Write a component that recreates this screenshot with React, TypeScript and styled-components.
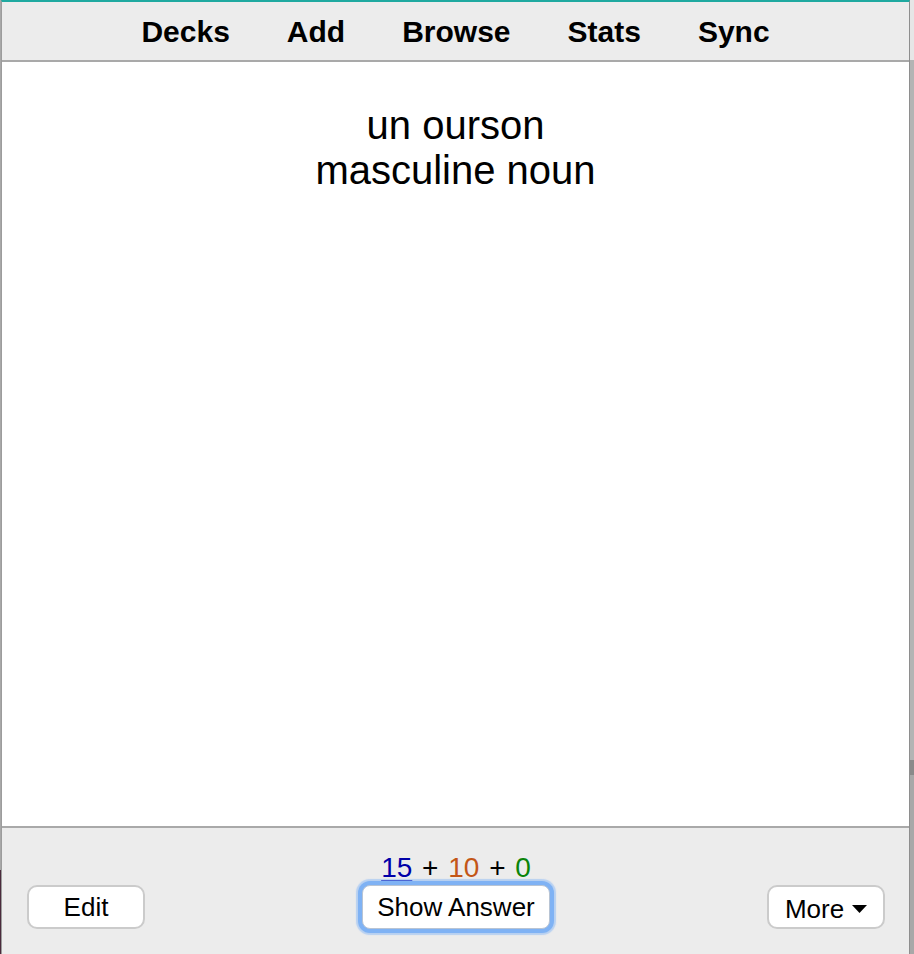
import React from "react";
import styled, { createGlobalStyle } from "styled-components";

const GlobalStyle = createGlobalStyle`
  html, body {
    margin: 0;
    padding: 0;
    background: #b8b8b8;
    overflow: hidden;
  }
  * { box-sizing: border-box; }
`;

const Screen = styled.div`
  display: flex;
  width: 914px;
  height: 954px;
  font-family: "Liberation Sans", Arial, Helvetica, sans-serif;
`;

const DesktopEdge = styled.div<{ $w: number; $bg: string }>`
  flex: 0 0 ${(p) => p.$w}px;
  background: ${(p) => p.$bg};
`;

const Window = styled.div`
  flex: 1;
  display: flex;
  flex-direction: column;
  border-top: 2px solid #1fa9a0;
  border-left: 1px solid #9c9c9c;
  border-right: 1px solid #8e8e8e;
  background: #ececec;
`;

const Toolbar = styled.nav`
  flex: 0 0 60px;
  display: flex;
  justify-content: center;
  align-items: center;
  gap: 57px;
  padding-top: 1px;
  background: #ececec;
  border-bottom: 2px solid #a9a9a9;
`;

const ToolLink = styled.span`
  font-size: 30px;
  font-weight: bold;
  color: #000;
`;

const Card = styled.main`
  flex: 1;
  background: #fff;
  padding-top: 41px;
  text-align: center;
  font-size: 40px;
  line-height: 45px;
  color: #000;
`;

const BottomBar = styled.footer`
  flex: 0 0 128px;
  display: grid;
  grid-template-columns: 1fr auto 1fr;
  align-items: end;
  padding: 0 24px 25px 25px;
  background: #ececec;
  border-top: 2px solid #a9a9a9;
`;

const Center = styled.div`
  display: flex;
  flex-direction: column;
  align-items: center;
`;

const Counts = styled.div`
  font-size: 28px;
  line-height: 30px;
  margin-bottom: 2px;
  word-spacing: 2px;
  color: #000;
`;

const Count = styled.span<{ $color: string; $underline?: boolean }>`
  color: ${(p) => p.$color};
  text-decoration: ${(p) => (p.$underline ? "underline" : "none")};
  text-decoration-thickness: 2px;
  text-underline-offset: 3px;
`;

const Button = styled.button<{ $width: number; $focused?: boolean; $align?: string }>`
  justify-self: ${(p) => p.$align || "center"};
  width: ${(p) => p.$width}px;
  height: 44px;
  display: inline-flex;
  align-items: center;
  justify-content: center;
  padding: 0;
  font-family: "Liberation Sans", Arial, Helvetica, sans-serif;
  font-size: 26px;
  color: #000;
  background: #fff;
  border: ${(p) => (p.$focused ? "1px solid #b8c4d4" : "2px solid #cbcbcb")};
  border-radius: ${(p) => (p.$focused ? "8px" : "10px")};
  box-shadow: ${(p) =>
    p.$focused
      ? "0 0 0 4px #7fb2f4, 0 0 1px 6px rgba(140, 185, 245, 0.55)"
      : "none"};
`;

const MoreLabel = styled.span`
  display: inline-flex;
  align-items: center;
  gap: 8px;
  padding-top: 4px;
`;

export default function App() {
  return (
    <>
      <GlobalStyle />
      <Screen>
        <DesktopEdge $w={1} $bg="linear-gradient(#a8a8a8 0, #a8a8a8 870px, #4a2a3c 870px)" />
        <Window>
          <Toolbar>
            <ToolLink>Decks</ToolLink>
            <ToolLink>Add</ToolLink>
            <ToolLink>Browse</ToolLink>
            <ToolLink>Stats</ToolLink>
            <ToolLink>Sync</ToolLink>
          </Toolbar>
          <Card>
            un ourson
            <br />
            masculine noun
          </Card>
          <BottomBar>
            <Button $width={118} $align="start">Edit</Button>
            <Center>
              <Counts>
                <Count $color="#0000a8" $underline>15</Count> +{" "}
                <Count $color="#c35617">10</Count> +{" "}
                <Count $color="#0a840a">0</Count>
              </Counts>
              <Button $width={188} $focused>Show Answer</Button>
            </Center>
            <Button $width={118} $align="end">
              <MoreLabel>
                More
                <svg width="15" height="8" viewBox="0 0 15 8" aria-hidden="true">
                  <polygon points="0,0 15,0 7.5,8" fill="#000" />
                </svg>
              </MoreLabel>
            </Button>
          </BottomBar>
        </Window>
        <DesktopEdge $w={4} $bg="linear-gradient(#e6e6e6 0, #e6e6e6 60px, #b4b4b4 60px, #b4b4b4 760px, #8a8a8a 760px, #8a8a8a 775px, #a8a8a8 775px)" />
      </Screen>
    </>
  );
}
